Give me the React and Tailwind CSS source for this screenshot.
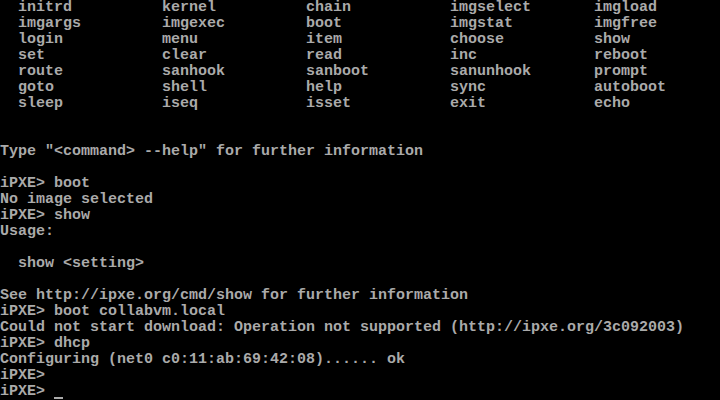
import React from "react";

const cmds = [
  ["initrd", "kernel", "chain", "imgselect", "imgload"],
  ["imgargs", "imgexec", "boot", "imgstat", "imgfree"],
  ["login", "menu", "item", "choose", "show"],
  ["set", "clear", "read", "inc", "reboot"],
  ["route", "sanhook", "sanboot", "sanunhook", "prompt"],
  ["goto", "shell", "help", "sync", "autoboot"],
  ["sleep", "iseq", "isset", "exit", "echo"],
];

const lines = [
  ...cmds.map((r) => "  " + r.map((c) => c.padEnd(16)).join("").trimEnd()),
  "",
  "",
  'Type "<command> --help" for further information',
  "",
  "iPXE> boot",
  "No image selected",
  "iPXE> show",
  "Usage:",
  "",
  "  show <setting>",
  "",
  "See http://ipxe.org/cmd/show for further information",
  "iPXE> boot collabvm.local",
  "Could not start download: Operation not supported (http://ipxe.org/3c092003)",
  "iPXE> dhcp",
  "Configuring (net0 c0:11:ab:69:42:08)...... ok",
  "iPXE>",
];

export default function App() {
  return (
    <div className="w-[720px] h-[400px] bg-black overflow-hidden text-[#aaaaaa] font-['Liberation_Mono',monospace] text-[15px] leading-[16px] font-bold">
      {lines.map((l, i) => (
        <div key={i} className="h-[16px] whitespace-pre">
          {l}
        </div>
      ))}
      <div className="h-[16px] whitespace-pre flex">
        <span>iPXE> </span>
        <span className="inline-block w-[9px] h-[16px] relative">
          <span className="absolute left-0 right-0 bottom-[1px] h-[2px] bg-[#aaaaaa]" />
        </span>
      </div>
    </div>
  );
}
